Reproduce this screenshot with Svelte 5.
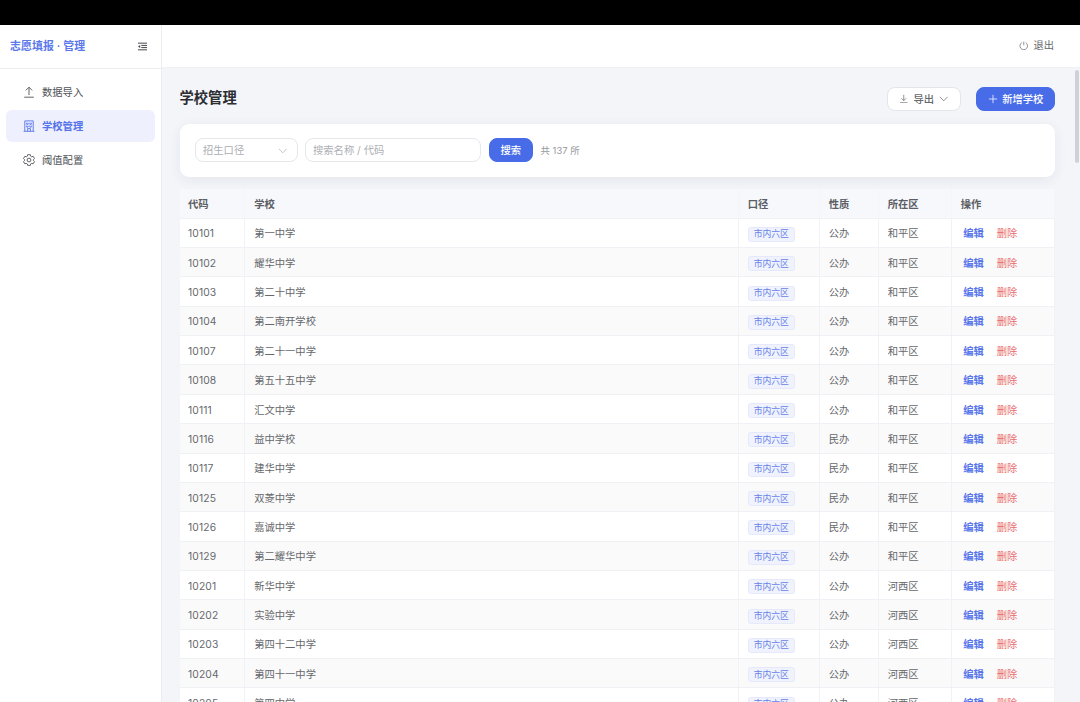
<script lang="ts">
  type School = { code: string; name: string; kind: string; district: string };

  const columns = ['代码', '学校', '口径', '性质', '所在区', '操作'];

  const data: [string, string, string, string][] = [
    ['10101', '第一中学', '公办', '和平区'],
    ['10102', '耀华中学', '公办', '和平区'],
    ['10103', '第二十中学', '公办', '和平区'],
    ['10104', '第二南开学校', '公办', '和平区'],
    ['10107', '第二十一中学', '公办', '和平区'],
    ['10108', '第五十五中学', '公办', '和平区'],
    ['10111', '汇文中学', '公办', '和平区'],
    ['10116', '益中学校', '民办', '和平区'],
    ['10117', '建华中学', '民办', '和平区'],
    ['10125', '双菱中学', '民办', '和平区'],
    ['10126', '嘉诚中学', '民办', '和平区'],
    ['10129', '第二耀华中学', '公办', '和平区'],
    ['10201', '新华中学', '公办', '河西区'],
    ['10202', '实验中学', '公办', '河西区'],
    ['10203', '第四十二中学', '公办', '河西区'],
    ['10204', '第四十一中学', '公办', '河西区'],
    ['10205', '第四中学', '公办', '河西区'],
  ];

  let schools: School[] = $state(
    data.map(([code, name, kind, district]) => ({ code, name, kind, district }))
  );
  let keyword = $state('');
  let query = $state('');

  const visible = $derived(
    schools.filter(s => s.name.includes(query) || s.code.includes(query))
  );

  function remove(code: string) {
    schools = schools.filter(s => s.code !== code);
  }
</script>

<div class="screen">
  <div class="titlebar"></div>
  <div class="app">
    <aside>
      <div class="brand">
        <span>志愿填报 · 管理</span>
        <svg class="fold" viewBox="0 0 12 10">
          <path d="M1 1.3h10M4.6 3.8H11M4.6 6.2H11M1 8.7h10" />
          <path class="solid" d="M3.4 3.2v3.6L1 5z" />
        </svg>
      </div>
      <nav>
        <a href="#import">
          <svg viewBox="0 0 12 12"><path d="M6 9V1.3M2.8 4.4 6 1.2l3.2 3.2M1.2 11.2h9.6" /></svg>
          数据导入
        </a>
        <a href="#schools" class="active">
          <svg viewBox="0 0 12 12">
            <path d="M1.8 11.2V.9h8.4v10.3M.6 11.3h10.8M4.6 11.2V8.6h2.8v2.6M3.7 2.7v1.6h1.4V2.7M6.9 2.7v1.6h1.4V2.7M3.7 5.6v1.5h1.4V5.6M6.9 5.6v1.5h1.4V5.6" />
          </svg>
          学校管理
        </a>
        <a href="#threshold">
          <svg viewBox="0 0 12 12">
            <path d="M4.7.7h2.6l.4 1.5 1 .6 1.5-.5 1.3 2.3-1.1 1v1l1.1 1-1.3 2.2-1.5-.4-1 .5-.4 1.5H4.7l-.4-1.5-1-.5-1.5.4L.5 7.6l1.1-1v-1l-1.1-1 1.3-2.3 1.5.5 1-.6z" />
            <circle cx="6" cy="6" r="1.9" />
          </svg>
          阈值配置
        </a>
      </nav>
    </aside>

    <div class="main">
      <header>
        <button class="logout">
          <svg viewBox="0 0 12 12"><path d="M3.6 2A4.8 4.8 0 1 0 8.4 2M6 .8v4.6" /></svg>
          退出
        </button>
      </header>

      <main>
        <div class="page-head">
          <h1>学校管理</h1>
          <div class="actions">
            <button class="btn">
              <svg class="down" viewBox="0 0 12 12"><path d="M6 1v7.2M3 5.4l3 3 3-3M1.2 11h9.6" /></svg>
              导出
              <svg class="caret" viewBox="0 0 12 12"><path d="M1.2 3.6 6 8.6l4.8-5" /></svg>
            </button>
            <button class="btn primary">
              <svg class="plus" viewBox="0 0 12 12"><path d="M6 1v10M1 6h10" /></svg>
              新增学校
            </button>
          </div>
        </div>

        <section class="filter">
          <div class="select">
            <span>招生口径</span>
            <svg class="caret" viewBox="0 0 12 12"><path d="M1.2 3.6 6 8.6l4.8-5" /></svg>
          </div>
          <input placeholder="搜索名称 / 代码" bind:value={keyword} />
          <button class="btn primary search" onclick={() => (query = keyword)}>搜索</button>
          <span class="total">共 137 所</span>
        </section>

        <div class="table" role="table">
          <div class="row head" role="row">
            {#each columns as col}
              <div class="cell" role="columnheader">{col}</div>
            {/each}
          </div>
          {#each visible as school, i (school.code)}
            <div class="row" class:striped={i % 2 === 1} role="row">
              <div class="cell code" role="cell">{school.code}</div>
              <div class="cell" role="cell">{school.name}</div>
              <div class="cell" role="cell"><span class="tag">市内六区</span></div>
              <div class="cell" role="cell">{school.kind}</div>
              <div class="cell" role="cell">{school.district}</div>
              <div class="cell ops" role="cell">
                <button class="edit">编辑</button>
                <button class="delete" onclick={() => remove(school.code)}>删除</button>
              </div>
            </div>
          {/each}
        </div>
      </main>
      <div class="scrollbar"></div>
    </div>
  </div>
</div>

<style>
  .screen {
    width: 1080px; height: 702px; overflow: hidden;
    display: flex; flex-direction: column;
    font-family: Inter, "Noto Sans CJK SC", sans-serif;
    font-size: 10.3px; line-height: 16px; color: #66686c;
    background: #fff;
  }
  .screen * { box-sizing: border-box; }
  .titlebar { height: 24.5px; background: #000; flex-shrink: 0; }
  .app { display: flex; flex: 1; min-height: 0; }

  button, input { font: inherit; color: inherit; border: 0; margin: 0; background: none; }
  button { padding: 0; cursor: pointer; }
  svg { fill: none; stroke: currentColor; stroke-width: 0.9; flex-shrink: 0; }

  aside { width: 161.5px; border-right: 1px solid #ebedf1; flex-shrink: 0; background: #fff; }
  .brand {
    height: 44px; padding: 0 12.5px 0 10px;
    display: flex; align-items: center; justify-content: space-between;
    border-bottom: 1px solid #ebedf1;
    font-size: 10.9px; font-weight: 600; letter-spacing: 0.1px; color: #5b78ea;
  }
  .brand span { padding-bottom: 1px; }
  .fold { width: 11px; height: 9px; color: #44474d; stroke-width: 1.1; }
  .fold .solid { fill: currentColor; stroke: none; }

  nav { padding: 7px 6px; display: flex; flex-direction: column; gap: 1.5px; }
  nav a {
    height: 32.5px; padding-left: 17px; border-radius: 6px;
    display: flex; align-items: center; gap: 7px;
    color: #505358; text-decoration: none;
  }
  nav a svg { width: 12px; height: 12px; }
  nav a.active { background: #eef0fd; color: #5472e9; font-weight: 600; }

  .main { flex: 1; min-width: 0; display: flex; flex-direction: column; position: relative; background: #f3f5f9; }
  header {
    height: 43.5px; padding: 0 26px 1px 0; flex-shrink: 0;
    display: flex; align-items: center; justify-content: flex-end;
    background: #fff; border-bottom: 1px solid #f0f1f4;
  }
  .logout { display: flex; align-items: center; gap: 5px; }
  .logout svg { width: 9.5px; height: 9.5px; }

  main { padding: 18.5px 25.5px 0 18px; }
  .page-head { height: 24px; display: flex; align-items: center; justify-content: space-between; }
  h1 { margin: 0; font-size: 14.3px; font-weight: 600; line-height: 20px; color: #2b2d31; padding-bottom: 1px; }
  .actions { display: flex; gap: 15px; }
  .btn {
    height: 24px; padding: 0 11px; border-radius: 8px;
    display: flex; align-items: center; gap: 5px;
    background: #fff; border: 1px solid #e3e5ea; font-weight: 500;
  }
  .btn.primary { padding: 0 10.5px; background: #486ce8; border-color: #486ce8; color: #fff; }
  .actions .btn.primary { padding: 0 10.2px 0 11px; gap: 4.5px; }
  .down, .caret { width: 9.5px; height: 9.5px; }
  .plus { width: 10px; height: 10px; }

  .filter {
    margin-top: 13px; height: 53.5px; padding: 0 15px;
    display: flex; align-items: center; gap: 7.5px;
    background: #fff; border-radius: 9px;
    box-shadow: 0 3px 13px rgba(30, 40, 60, 0.07);
  }
  .select, input {
    height: 24px; padding: 0 7.5px; border: 1px solid #e5e7eb; border-radius: 8px;
    display: flex; align-items: center; color: #adafb4;
  }
  .select { width: 103px; padding-right: 9px; justify-content: space-between; }
  input { width: 176px; padding-left: 7px; outline: none; }
  input::placeholder { color: #adafb4; opacity: 1; }
  .filter .search { padding: 0 11px; }
  .total { padding-top: 2px; font-size: 9.4px; color: #96989d; }

  .table { margin-top: 11.5px; background: #fff; }
  .row {
    height: 29.37px; border-bottom: 1px solid #f0f1f4;
    display: grid; grid-template-columns: 65.5px 493.5px 81px 59px 73px 1fr;
  }
  .row.striped { background: #fafafa; }
  .row.head { height: 30.2px; background: #f7f8fb; font-weight: 600; color: #5b5e64; }
  .cell {
    display: flex; align-items: center; padding: 1px 0 0 9.2px;
    border-right: 1px solid #f1f2f5;
  }
  .cell:first-child { padding-left: 8.5px; }
  .head .cell { border-right-color: #f4f5f8; }
  .code { letter-spacing: 0.12px; }
  .tag {
    height: 15px; padding: 0 5px; margin-top: 2px;
    display: flex; align-items: center;
    border: 1px solid #e5e9fb; border-radius: 3px;
    background: #f0f3fe; color: #6883e8; font-size: 8.8px;
  }
  .ops { gap: 13px; padding-left: 11.7px; }
  .edit { color: #5876ea; font-weight: 600; }
  .delete { color: #ea6b6b; }

  .scrollbar {
    position: absolute; top: 45px; right: 1px;
    width: 4.5px; height: 93px; border-radius: 3px; background: #cfd1d6;
  }
</style>
